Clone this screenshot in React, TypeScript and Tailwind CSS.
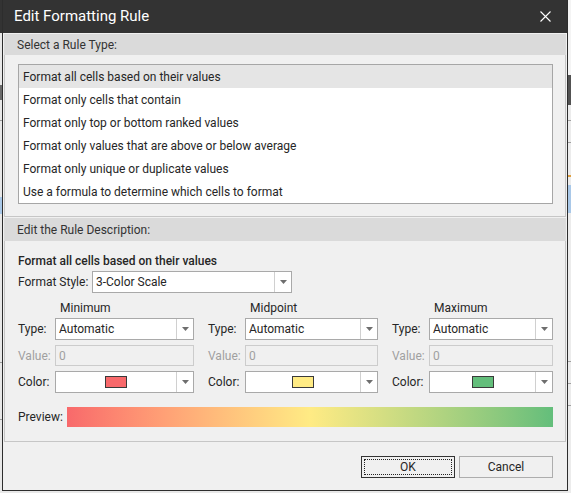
import React from 'react';

const ruleTypes = [
  'Format all cells based on their values',
  'Format only cells that contain',
  'Format only top or bottom ranked values',
  'Format only values that are above or below average',
  'Format only unique or duplicate values',
  'Use a formula to determine which cells to format',
];

function Arrow() {
  return (
    <svg width="7" height="4" viewBox="0 0 7 4">
      <path d="M0 0h7L3.5 4z" fill="#6e6e6e" />
    </svg>
  );
}

function Combo({ className, children }: { className: string; children?: React.ReactNode }) {
  return (
    <div className={`flex h-[22px] border border-[#a9a9a9] bg-white ${className}`}>
      <div className="flex flex-1 items-center px-[3px]">{children}</div>
      <div className="flex w-[17px] items-center justify-center border-l border-[#d0d0d0]">
        <Arrow />
      </div>
    </div>
  );
}

function ScaleColumn({
  title,
  swatch,
  width,
  comboWidth,
}: {
  title: string;
  swatch: string;
  width: string;
  comboWidth: string;
}) {
  return (
    <div className={`flex flex-col ${width}`}>
      <div className="h-[16px] pl-[42px] leading-[16px]">{title}</div>
      <div className="mt-[2px] flex items-center">
        <span className="w-[37px]">Type:</span>
        <Combo className={comboWidth}>Automatic</Combo>
      </div>
      <div className="mt-[5px] flex items-center">
        <span className="w-[37px] text-[#a0a0a0]">Value:</span>
        <div className={`flex h-[21px] items-center border border-[#cccccc] bg-[#f0f0f0] px-[3px] text-[#a0a0a0] ${comboWidth}`}>
          0
        </div>
      </div>
      <div className="mt-[5px] flex items-center">
        <span className="w-[37px]">Color:</span>
        <Combo className={comboWidth}>
          <div className="flex flex-1 justify-center">
            <div className="h-[12px] w-[22px] border border-[#3a3a3a]" style={{ backgroundColor: swatch }} />
          </div>
        </Combo>
      </div>
    </div>
  );
}

function SectionHeader({ label, height }: { label: string; height: string }) {
  return (
    <div className={`flex items-center bg-[#dadada] pl-[13px] text-[#333333] ${height}`}>{label}</div>
  );
}

export default function App() {
  return (
    <div className="flex h-[493px] w-[571px] overflow-hidden bg-[#e8e8e8] font-['Segoe_UI',Roboto,sans-serif] text-[12px] text-[#262626]">
      {/* sliver of the sheet behind the dialog, left */}
      <div className="flex w-[2px] shrink-0 flex-col">
        <div className="h-[33px] bg-[#333333]" />
        <div className="h-[52px]" />
        <div className="h-[15px] bg-[#6a6a6a]" />
        <div className="h-[20px]" />
        <div className="h-[1px] bg-[#9c9c9c]" />
        <div className="h-[76px]" />
        <div className="h-[17px] bg-[#a9c8e8]" />
        <div className="h-[148px]" />
        <div className="h-[1px] bg-[#9c9c9c]" />
        <div className="h-[56px]" />
        <div className="h-[1px] bg-[#9c9c9c]" />
      </div>

      {/* dialog window */}
      <div className="flex h-[491px] w-[566px] shrink-0 flex-col border-x border-b border-[#2d2d2d] bg-[#f0f0f0]">
        <div className="flex h-[33px] shrink-0 items-center justify-between bg-[#333333] pl-[11px] pr-[16px] text-white">
          <span className="text-[15px]">Edit Formatting Rule</span>
          <svg width="11" height="11" viewBox="0 0 11 11">
            <path d="M0.5 0.5L10.5 10.5M10.5 0.5L0.5 10.5" stroke="#ffffff" strokeWidth="1.1" />
          </svg>
        </div>

        {/* rule type group */}
        <div className="ml-[1px] mt-[1px] flex w-[562px] flex-col">
          <SectionHeader label="Select a Rule Type:" height="h-[21px]" />
          <div className="border-x border-b border-[#c6c6c6] pb-[12px] pl-[13px] pt-[9px]">
            <div className="w-[535px] border border-[#a6a6a6] bg-white">
              {ruleTypes.map((t, i) => (
                <div
                  key={t}
                  className={`flex h-[23px] items-center pl-[4px] ${i === 0 ? 'bg-[#e5e5e5]' : ''}`}
                >
                  {t}
                </div>
              ))}
            </div>
          </div>
        </div>

        {/* rule description group */}
        <div className="ml-[1px] mt-[1px] flex w-[562px] flex-col">
          <SectionHeader label="Edit the Rule Description:" height="h-[23px]" />
          <div className="flex flex-col border-x border-b border-[#c6c6c6] pb-[14px] pl-[13px] pt-[12px]">
            <div className="h-[16px] font-medium leading-[16px]">Format all cells based on their values</div>
            <div className="mt-[2px] flex items-center">
              <span className="w-[74px]">Format Style:</span>
              <Combo className="w-[200px]">3-Color Scale</Combo>
            </div>
            <div className="mt-[7px] flex gap-[14px]">
              <ScaleColumn title="Minimum" swatch="#f8696b" width="w-[176px]" comboWidth="w-[139px]" />
              <ScaleColumn title="Midpoint" swatch="#ffeb84" width="w-[170px]" comboWidth="w-[133px]" />
              <ScaleColumn title="Maximum" swatch="#63be7b" width="w-[161px]" comboWidth="w-[124px]" />
            </div>
            <div className="mt-[14px] flex items-center">
              <span className="w-[49px]">Preview:</span>
              <div className="h-[20px] w-[486px] bg-linear-to-r from-[#f8696b] via-[#ffeb84] to-[#63be7b]" />
            </div>
          </div>
        </div>

        <div className="mt-[14px] flex justify-end gap-[4px] pr-[14px]">
          <button className="h-[22px] w-[94px] border border-[#333333] bg-[#f0f0f0] p-[2px]">
            <div className="flex h-full items-center justify-center border border-dotted border-[#222222]">OK</div>
          </button>
          <button className="h-[22px] w-[94px] border border-[#adadad] bg-[#f0f0f0]">Cancel</button>
        </div>
      </div>

      {/* sliver of the sheet behind the dialog, right */}
      <div className="flex w-[3px] shrink-0 flex-col bg-[#ececec]">
        <div className="h-[75px] bg-[#f4f4f4]" />
        <div className="h-[30px] bg-[#525252]" />
        <div className="h-[15px]" />
        <div className="h-[1px] bg-[#a0a0a0]" />
        <div className="h-[21px]" />
        <div className="h-[1px] bg-[#a0a0a0]" />
        <div className="h-[32px]" />
        <div className="h-[2px] bg-[#e0a040]" />
        <div className="h-[8px]" />
        <div className="h-[28px] bg-[#a9c8e8]" />
        <div className="h-[148px]" />
        <div className="h-[1px] bg-[#a0a0a0]" />
        <div className="h-[21px]" />
        <div className="h-[1px] bg-[#a0a0a0]" />
        <div className="h-[21px]" />
        <div className="h-[1px] bg-[#a0a0a0]" />
      </div>
    </div>
  );
}
